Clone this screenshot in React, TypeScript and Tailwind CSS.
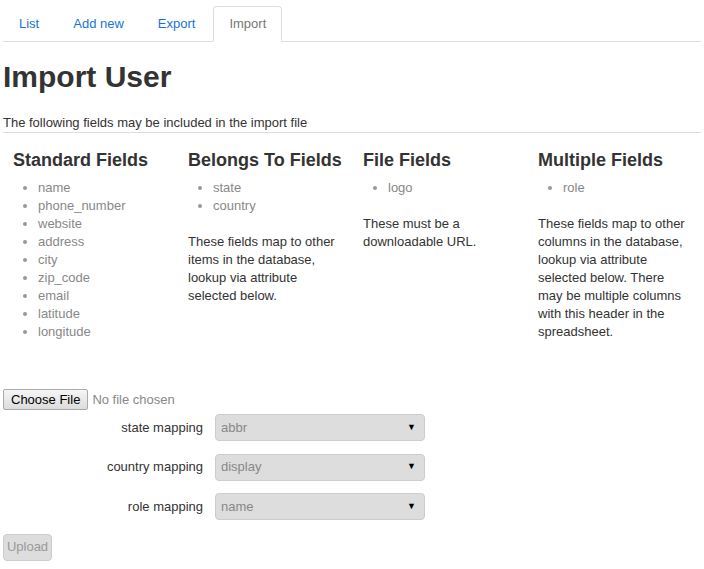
import { useState } from "react";

const tabs = ["List", "Add new", "Export", "Import"];

const standardFields = [
	"name",
	"phone_number",
	"website",
	"address",
	"city",
	"zip_code",
	"email",
	"latitude",
	"longitude",
];

function FieldColumn({
	title,
	items,
	note,
}: {
	title: string;
	items: string[];
	note?: string;
}) {
	return (
		<div className="w-[175px] shrink-0 pl-[10px] pr-[15px]">
			<h3 className="whitespace-nowrap text-[18px] font-bold leading-[20px] text-[#333]">
				{title}
			</h3>
			<ul className="mt-[9px] list-disc pl-[25px] text-[#888] marker:text-[#999]">
				{items.map((item) => (
					<li className="leading-[18px]" key={item}>
						{item}
					</li>
				))}
			</ul>
			{note && <p className="mt-[18px] leading-[18px] text-[#333]">{note}</p>}
		</div>
	);
}

function MappingRow({ label, value }: { label: string; value: string }) {
	return (
		<div className="mb-[12.5px] flex h-[27px] items-center">
			<label className="w-[212px] pr-[12px] text-right text-[#333]">{label}</label>
			<div className="flex h-[27px] w-[210px] items-center justify-between rounded-[4px] border border-[#ccc] bg-[#ddd] pl-[5px] pr-[8px] text-[#888]">
				<span>{value}</span>
				<span className="text-[9px] text-black">▼</span>
			</div>
		</div>
	);
}

export default function App() {
	const [active] = useState("Import");

	return (
		<div className="min-h-[569px] overflow-hidden bg-white px-[3px] font-['Liberation_Sans',Arial,sans-serif] text-[13px] text-[#333]">
			<div className="flex border-b border-[#ddd] pt-[6px]">
				{tabs.map((tab) =>
					tab === active ? (
						<div
							className="mb-[-1px] mr-[2px] flex h-[36px] items-center rounded-t-[4px] border border-[#ddd] border-b-white bg-white px-[15px] text-[#777]"
							key={tab}
						>
							{tab}
						</div>
					) : (
						<div
							className="mb-[-1px] mr-[2px] flex h-[36px] items-center border border-transparent px-[15px] text-[#1a73d9]"
							key={tab}
						>
							{tab}
						</div>
					)
				)}
			</div>

			<h1 className="mt-[18px] text-[30px] font-bold leading-[33px] text-[#333]">
				Import User
			</h1>

			<p className="mt-[21px] border-b border-[#ddd] leading-[18px]">
				The following fields may be included in the import file
			</p>

			<div className="mt-[17px] flex">
				<FieldColumn items={standardFields} title="Standard Fields" />
				<FieldColumn
					items={["state", "country"]}
					note="These fields map to other items in the database, lookup via attribute selected below."
					title="Belongs To Fields"
				/>
				<FieldColumn
					items={["logo"]}
					note="These must be a downloadable URL."
					title="File Fields"
				/>
				<FieldColumn
					items={["role"]}
					note="These fields map to other columns in the database, lookup via attribute selected below. There may be multiple columns with this header in the spreadsheet."
					title="Multiple Fields"
				/>
			</div>

			<div className="mt-[48px] flex h-[21px] items-center">
				<span className="flex h-[21px] items-center rounded-[2px] border border-[#aaa] bg-gradient-to-b from-[#f6f6f6] to-[#dcdcdc] px-[7px] text-black">
					Choose File
				</span>
				<span className="ml-[4px] text-[#888]">No file chosen</span>
			</div>

			<div className="mt-[4px]">
				<MappingRow label="state mapping" value="abbr" />
				<MappingRow label="country mapping" value="display" />
				<MappingRow label="role mapping" value="name" />
			</div>

			<button
				className="mt-[1px] h-[27px] w-[49px] rounded-[4px] border border-[#ccc] bg-[#ddd] text-[13px] text-[#999]"
				disabled
				type="button"
			>
				Upload
			</button>
		</div>
	);
}
